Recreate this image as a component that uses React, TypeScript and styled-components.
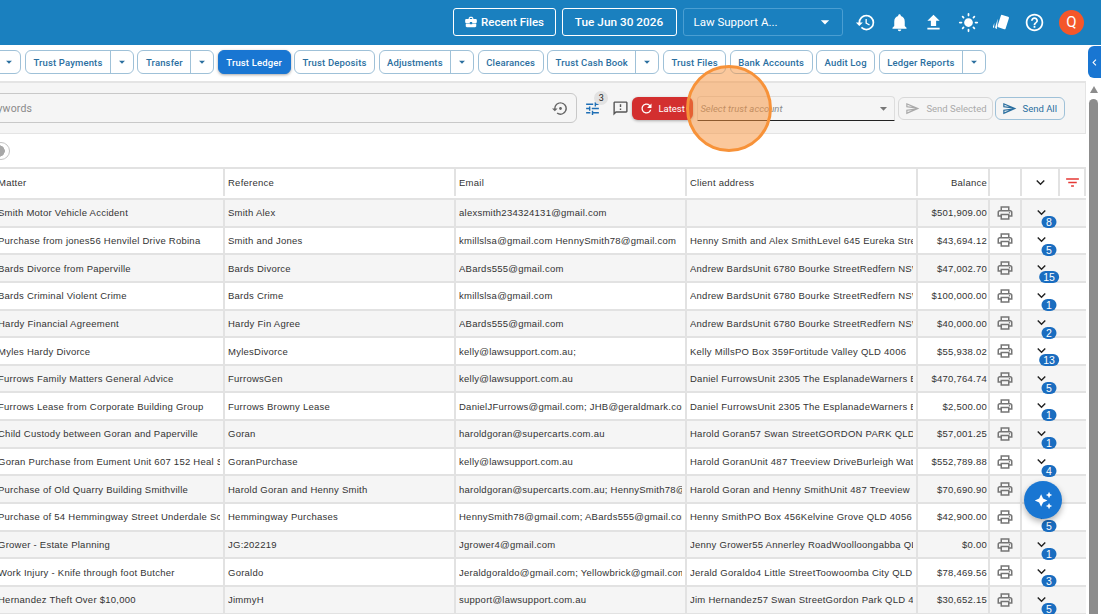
import styled, { createGlobalStyle } from "styled-components";
import {
  MdArrowDropDown,
  MdAutoAwesome,
  MdBusinessCenter,
  MdChevronLeft,
  MdFileUpload,
  MdFilterList,
  MdHelpOutline,
  MdHistory,
  MdKeyboardArrowDown,
  MdLightMode,
  MdNotifications,
  MdOutlineFeedback,
  MdOutlinePrint,
  MdOutlineSend,
  MdRefresh,
  MdSettingsBackupRestore,
  MdTune,
} from "react-icons/md";

const GlobalStyle = createGlobalStyle`
  html, body {
    margin: 0;
    padding: 0;
    overflow: hidden;
    background: #fff;
  }
`;

const tabs = [
  { label: "Trust Receipts", split: true },
  { label: "Trust Payments", split: true },
  { label: "Transfer", split: true },
  { label: "Trust Ledger", active: true },
  { label: "Trust Deposits" },
  { label: "Adjustments", split: true },
  { label: "Clearances" },
  { label: "Trust Cash Book", split: true },
  { label: "Trust Files" },
  { label: "Bank Accounts" },
  { label: "Audit Log" },
  { label: "Ledger Reports", split: true },
];

const rows = [
  ["Smith Motor Vehicle Accident", "Smith Alex", "alexsmith234324131@gmail.com", "", "$501,909.00", "8"],
  ["Purchase from jones56 Henvilel Drive Robina", "Smith and Jones", "kmillslsa@gmail.com HennySmith78@gmail.com", "Henny Smith and Alex SmithLevel 645 Eureka Street", "$43,694.12", "5"],
  ["Bards Divorce from Paperville", "Bards Divorce", "ABards555@gmail.com", "Andrew BardsUnit 6780 Bourke StreetRedfern NSW", "$47,002.70", "15"],
  ["Bards Criminal Violent Crime", "Bards Crime", "kmillslsa@gmail.com", "Andrew BardsUnit 6780 Bourke StreetRedfern NSW", "$100,000.00", "1"],
  ["Hardy Financial Agreement", "Hardy Fin Agree", "ABards555@gmail.com", "Andrew BardsUnit 6780 Bourke StreetRedfern NSW", "$40,000.00", "2"],
  ["Myles Hardy Divorce", "MylesDivorce", "kelly@lawsupport.com.au;", "Kelly MillsPO Box 359Fortitude Valley QLD 4006", "$55,938.02", "13"],
  ["Furrows Family Matters General Advice", "FurrowsGen", "kelly@lawsupport.com.au", "Daniel FurrowsUnit 2305 The EsplanadeWarners Bay", "$470,764.74", "5"],
  ["Furrows Lease from Corporate Building Group", "Furrows Browny Lease", "DanielJFurrows@gmail.com; JHB@geraldmark.com", "Daniel FurrowsUnit 2305 The EsplanadeWarners Bay", "$2,500.00", "1"],
  ["Child Custody between Goran and Paperville", "Goran", "haroldgoran@supercarts.com.au", "Harold Goran57 Swan StreetGORDON PARK QLD", "$57,001.25", "1"],
  ["Goran Purchase from Eument Unit 607 152 Heal Street", "GoranPurchase", "kelly@lawsupport.com.au", "Harold GoranUnit 487 Treeview DriveBurleigh Waters", "$552,789.88", "4"],
  ["Purchase of Old Quarry Building Smithville", "Harold Goran and Henny Smith", "haroldgoran@supercarts.com.au; HennySmith78@gmail.com", "Harold Goran and Henny SmithUnit 487 Treeview", "$70,690.90", "2"],
  ["Purchase of 54 Hemmingway Street Underdale School", "Hemmingway Purchases", "HennySmith78@gmail.com; ABards555@gmail.com", "Henny SmithPO Box 456Kelvine Grove QLD 4056", "$42,900.00", "5"],
  ["Grower - Estate Planning", "JG:202219", "Jgrower4@gmail.com", "Jenny Grower55 Annerley RoadWoolloongabba QLD", "$0.00", "1"],
  ["Work Injury - Knife through foot Butcher", "Goraldo", "Jeraldgoraldo@gmail.com; Yellowbrick@gmail.com", "Jerald Goraldo4 Little StreetToowoomba City QLD", "$78,469.56", "3"],
  ["Hernandez Theft Over $10,000", "JimmyH", "support@lawsupport.com.au", "Jim Hernandez57 Swan StreetGordon Park QLD 4031", "$30,652.15", "5"],
];

function CardsIcon() {
  return (
    <svg width="19" height="19" viewBox="0 0 19 19" fill="#fff">
      <rect x="7" y="2.5" width="8.5" height="13" rx="1.2" transform="rotate(18 11 9)" />
      <path d="M5.6 6.2 3.2 14c-.2.7.1 1.2.7 1.5l1.2.5-.2-1.2.9-8.6Z" />
      <path d="M2.4 9.8 1 13.5c-.2.6 0 1 .5 1.3l.6.3Z" />
    </svg>
  );
}

export default function App() {
  return (
    <Page>
      <GlobalStyle />
      <Header>
        <HeaderButton>
          <MdBusinessCenter size={14} />
          Recent Files
        </HeaderButton>
        <DateButton>Tue Jun 30 2026</DateButton>
        <FirmSelect>
          Law Support A...
          <MdArrowDropDown size={20} />
        </FirmSelect>
        <HeaderIcons>
          <MdHistory size={21} />
          <MdNotifications size={21} />
          <MdFileUpload size={21} />
          <MdLightMode size={21} />
          <CardsIcon />
          <MdHelpOutline size={21} />
        </HeaderIcons>
        <Avatar>Q</Avatar>
      </Header>

      <TabBar>
        {tabs.map((tab) => (
          <Tab key={tab.label} $active={tab.active}>
            <TabLabel>{tab.label}</TabLabel>
            {tab.split && (
              <TabCaret>
                <MdArrowDropDown size={14} />
              </TabCaret>
            )}
          </Tab>
        ))}
      </TabBar>
      <CollapseTab>
        <MdChevronLeft size={15} />
      </CollapseTab>

      <Body>
        <Content>
          <Toolbar>
            <SearchField>
              <SearchText>Search by keywords</SearchText>
              <MdSettingsBackupRestore size={17} />
            </SearchField>
            <FilterIcon>
              <MdTune size={17} />
              <CountBadge>3</CountBadge>
            </FilterIcon>
            <NoteIcon>
              <MdOutlineFeedback size={17} />
            </NoteIcon>
            <LatestButton>
              <MdRefresh size={15} />
              Latest
            </LatestButton>
            <AccountSelect>
              <AccountText>Select trust account</AccountText>
              <MdArrowDropDown size={17} />
            </AccountSelect>
            <SendButton disabled>
              <MdOutlineSend size={15} />
              Send Selected
            </SendButton>
            <SendButton>
              <MdOutlineSend size={15} />
              Send All
            </SendButton>
          </Toolbar>

          <ToggleRow>
            <ToggleKnob />
          </ToggleRow>

          <Table>
            <HeadRow>
              <Cell><Clip>Matter</Clip></Cell>
              <Cell><Clip>Reference</Clip></Cell>
              <Cell><Clip>Email</Clip></Cell>
              <Cell><Clip>Client address</Clip></Cell>
              <MoneyCell>Balance</MoneyCell>
              <Cell />
              <IconCell>
                <MdKeyboardArrowDown size={17} color="#222" />
              </IconCell>
              <IconCell>
                <MdFilterList size={17} color="#e53935" />
              </IconCell>
            </HeadRow>
            {rows.map((row) => (
              <DataRow key={row[0]}>
                <Cell><Clip>{row[0]}</Clip></Cell>
                <Cell><Clip>{row[1]}</Clip></Cell>
                <Cell><Clip>{row[2]}</Clip></Cell>
                <Cell><Clip>{row[3]}</Clip></Cell>
                <MoneyCell>{row[4]}</MoneyCell>
                <IconCell>
                  <MdOutlinePrint size={18} color="#757575" />
                </IconCell>
                <ExpandCell>
                  <MdKeyboardArrowDown size={17} color="#222" />
                  <RowBadge>{row[5]}</RowBadge>
                </ExpandCell>
                <LastCell />
              </DataRow>
            ))}
          </Table>
        </Content>
        <ScrollBar>
          <ScrollArrow />
          <ScrollThumb />
        </ScrollBar>
      </Body>

      <AssistButton>
        <MdAutoAwesome size={19} />
      </AssistButton>
      <ClickMarker />
    </Page>
  );
}

const Page = styled.div`
  position: relative;
  width: 1101px;
  height: 614px;
  overflow: hidden;
  display: flex;
  flex-direction: column;
  background: #fff;
  font-family: "Liberation Sans", Arial, sans-serif;
`;

const Header = styled.header`
  flex: 0 0 45px;
  box-sizing: border-box;
  display: flex;
  align-items: center;
  justify-content: flex-end;
  gap: 6px;
  padding: 0 17px 1px 0;
  background: #1a80bf;
  color: #fff;
  font-family: Roboto, sans-serif;
`;

const HeaderButton = styled.div`
  box-sizing: border-box;
  height: 28px;
  width: 103px;
  display: flex;
  align-items: center;
  justify-content: center;
  gap: 3px;
  border: 1px solid #fff;
  border-radius: 3px;
  font-size: 11.5px;
  font-weight: 500;
`;

const DateButton = styled(HeaderButton)`
  width: 115px;
  font-size: 11.8px;
`;

const FirmSelect = styled.div`
  box-sizing: border-box;
  height: 28px;
  width: 160px;
  display: flex;
  align-items: center;
  justify-content: space-between;
  padding: 0 7px 0 10px;
  border: 1px solid #4a9ed2;
  border-radius: 3px;
  font-size: 11.5px;
`;

const HeaderIcons = styled.div`
  width: 190px;
  display: flex;
  align-items: center;
  justify-content: space-between;
  margin-left: 6.5px;
  margin-right: 8px;
`;

const Avatar = styled.div`
  width: 25px;
  height: 25px;
  border-radius: 50%;
  display: flex;
  align-items: center;
  justify-content: center;
  background: #f4572a;
  font-size: 15px;
`;

const TabBar = styled.nav`
  flex: 0 0 36px;
  box-sizing: border-box;
  display: flex;
  align-items: center;
  justify-content: flex-end;
  gap: 3.5px;
  padding: 0 115px 2px 0;
  background: #fff;
`;

const Tab = styled.div<{ $active?: boolean }>`
  flex: none;
  box-sizing: border-box;
  height: 24px;
  display: flex;
  align-items: center;
  border: 1px solid ${(p) => (p.$active ? "#1976d2" : "#9fc1d8")};
  border-radius: 6px;
  background: ${(p) => (p.$active ? "#1976d2" : "#fff")};
  color: ${(p) => (p.$active ? "#fff" : "#2b6f9f")};
  box-shadow: ${(p) => (p.$active ? "0 1px 3px rgba(0,0,0,.35)" : "none")};
  font-family: Roboto, sans-serif;
  font-size: 9.5px;
  font-weight: 500;
  letter-spacing: 0.15px;
`;

const TabLabel = styled.span`
  padding: 0 7.5px;
  white-space: nowrap;
`;

const TabCaret = styled.span`
  width: 22px;
  height: 100%;
  display: flex;
  align-items: center;
  justify-content: center;
  border-left: 1px solid #9fc1d8;
`;

const CollapseTab = styled.div`
  position: absolute;
  top: 46px;
  right: 0;
  width: 13px;
  height: 32px;
  display: flex;
  align-items: center;
  justify-content: center;
  border-radius: 6px 0 0 6px;
  background: #1976d2;
  color: #fff;
`;

const Body = styled.div`
  flex: 1;
  min-height: 0;
  display: flex;
`;

const Content = styled.main`
  width: 1086px;
  overflow: hidden;
`;

const Toolbar = styled.div`
  box-sizing: border-box;
  height: 53px;
  display: flex;
  align-items: center;
  padding-right: 20px;
  border-top: 2px solid #e4e4e4;
  border-right: 1px solid #e4e4e4;
  border-bottom: 1px solid #e4e4e4;
  background: #f5f5f5;
  font-family: Roboto, sans-serif;
`;

const SearchField = styled.div`
  flex: 1;
  box-sizing: border-box;
  height: 30px;
  margin-left: -72px;
  padding: 0 7px 0 7px;
  display: flex;
  align-items: center;
  justify-content: space-between;
  border: 1px solid #c8c8c8;
  border-radius: 6px;
  color: #666;
`;

const SearchText = styled.span`
  font-size: 10.5px;
  color: #8a8a8a;
  letter-spacing: 0.2px;
`;

const FilterIcon = styled.div`
  position: relative;
  display: flex;
  margin-left: 7px;
  color: #1f6fb5;
`;

const CountBadge = styled.span`
  position: absolute;
  top: -9px;
  right: -7px;
  width: 14px;
  height: 14px;
  display: flex;
  align-items: center;
  justify-content: center;
  border-radius: 50%;
  background: #e2e2e2;
  color: #222;
  font-size: 9px;
`;

const NoteIcon = styled.div`
  display: flex;
  margin-left: 11px;
  color: #555;
`;

const LatestButton = styled.div`
  box-sizing: border-box;
  width: 61px;
  height: 23px;
  margin-left: 3px;
  padding-left: 7px;
  display: flex;
  align-items: center;
  gap: 4px;
  border-radius: 6px;
  background: #d32f2f;
  color: #fff;
  font-size: 9.5px;
  box-shadow: 0 1px 3px rgba(0, 0, 0, 0.3);
`;

const AccountSelect = styled.div`
  box-sizing: border-box;
  width: 198px;
  height: 25px;
  margin-left: 4px;
  padding: 0 2px;
  display: flex;
  align-items: center;
  justify-content: space-between;
  border: 1px solid #ddd;
  border-bottom: 1px solid #222;
  border-radius: 4px 4px 0 0;
  color: #777;
`;

const AccountText = styled.span`
  font-size: 9.5px;
  font-style: italic;
  color: #8a8a8a;
`;

const SendButton = styled.div<{ disabled?: boolean }>`
  box-sizing: border-box;
  height: 23px;
  margin-left: ${(p) => (p.disabled ? "3px" : "2px")};
  padding: 0 ${(p) => (p.disabled ? "5px" : "7px")} 0 6px;
  display: flex;
  align-items: center;
  gap: 6px;
  border: 1px solid ${(p) => (p.disabled ? "#d8d8d8" : "#9fc1d8")};
  border-radius: 6px;
  color: ${(p) => (p.disabled ? "#aaa" : "#2b6f9f")};
  font-size: 9.5px;
  white-space: nowrap;
`;

const ToggleRow = styled.div`
  box-sizing: border-box;
  height: 33px;
  display: flex;
  align-items: center;
  background: #fff;
`;

const ToggleKnob = styled.div`
  box-sizing: border-box;
  width: 18px;
  height: 18px;
  margin-left: -8px;
  display: flex;
  border: 1px solid #c4c4c4;
  border-radius: 50%;
  background: radial-gradient(circle at 6px 50%, #a8a8a8 0 5.5px, #fff 6px);
`;

const Table = styled.div`
  width: 1090px;
  margin-left: -4px;
  border-top: 2px solid #e2e2e2;
  font-size: 9.5px;
  color: #333;
`;

const HeadRow = styled.div`
  box-sizing: border-box;
  height: 31px;
  padding-bottom: 2px;
  display: grid;
  grid-template-columns: 229px 231px 231px 231px 72px 32px 38px 26px;
  border-bottom: 2px solid #e2e2e2;
  background: #fff;
`;

const DataRow = styled(HeadRow)`
  height: 27.65px;
  padding-bottom: 0;
  &:nth-child(even) {
    background: #f5f5f5;
  }
`;

const Cell = styled.div`
  box-sizing: border-box;
  min-width: 0;
  padding: 0 3px;
  display: flex;
  align-items: center;
  border-right: 2px solid #e2e2e2;
  &:first-child {
    padding-left: 2px;
  }
`;

const Clip = styled.span`
  flex: 1;
  min-width: 0;
  overflow: hidden;
  white-space: nowrap;
  letter-spacing: 0.25px;
`;

const MoneyCell = styled(Cell)`
  justify-content: flex-end;
  padding-right: 1px;
  letter-spacing: 0.25px;
`;

const IconCell = styled(Cell)`
  justify-content: center;
  padding: 0;
`;

const ExpandCell = styled.div`
  position: relative;
  display: flex;
  align-items: center;
  justify-content: center;
  padding-bottom: 1px;
`;

const LastCell = styled.div``;

const RowBadge = styled.span`
  position: absolute;
  z-index: 1;
  top: 16px;
  left: calc(50% + 8px);
  transform: translateX(-50%);
  box-sizing: border-box;
  min-width: 15px;
  height: 12px;
  padding: 0 4px;
  display: flex;
  align-items: center;
  justify-content: center;
  border-radius: 7px;
  background: #1a6dc0;
  color: #fff;
  font-size: 10.5px;
`;

const ScrollBar = styled.div`
  width: 15px;
  box-sizing: border-box;
  padding-right: 3px;
  display: flex;
  flex-direction: column;
  align-items: flex-end;
  background: #fff;
`;

const ScrollArrow = styled.div`
  width: 0;
  height: 0;
  margin: 5px 0 6px;
  border-left: 4.5px solid transparent;
  border-right: 4.5px solid transparent;
  border-bottom: 7px solid #8c8c8c;
`;

const ScrollThumb = styled.div`
  flex: 1;
  width: 9px;
  border-radius: 5px 5px 0 0;
  background: #8c8c8c;
`;

const AssistButton = styled.div`
  position: absolute;
  z-index: 3;
  left: 1024px;
  top: 481px;
  width: 38px;
  height: 38px;
  display: flex;
  align-items: center;
  justify-content: center;
  border-radius: 50%;
  background: #1976d2;
  color: #fff;
  box-shadow: 0 3px 6px rgba(0, 0, 0, 0.3);
`;

const ClickMarker = styled.div`
  position: absolute;
  z-index: 4;
  left: 686px;
  top: 65px;
  box-sizing: border-box;
  width: 86px;
  height: 87px;
  border: 3px solid #f79239;
  border-radius: 50%;
  background: rgba(247, 146, 57, 0.5);
`;
